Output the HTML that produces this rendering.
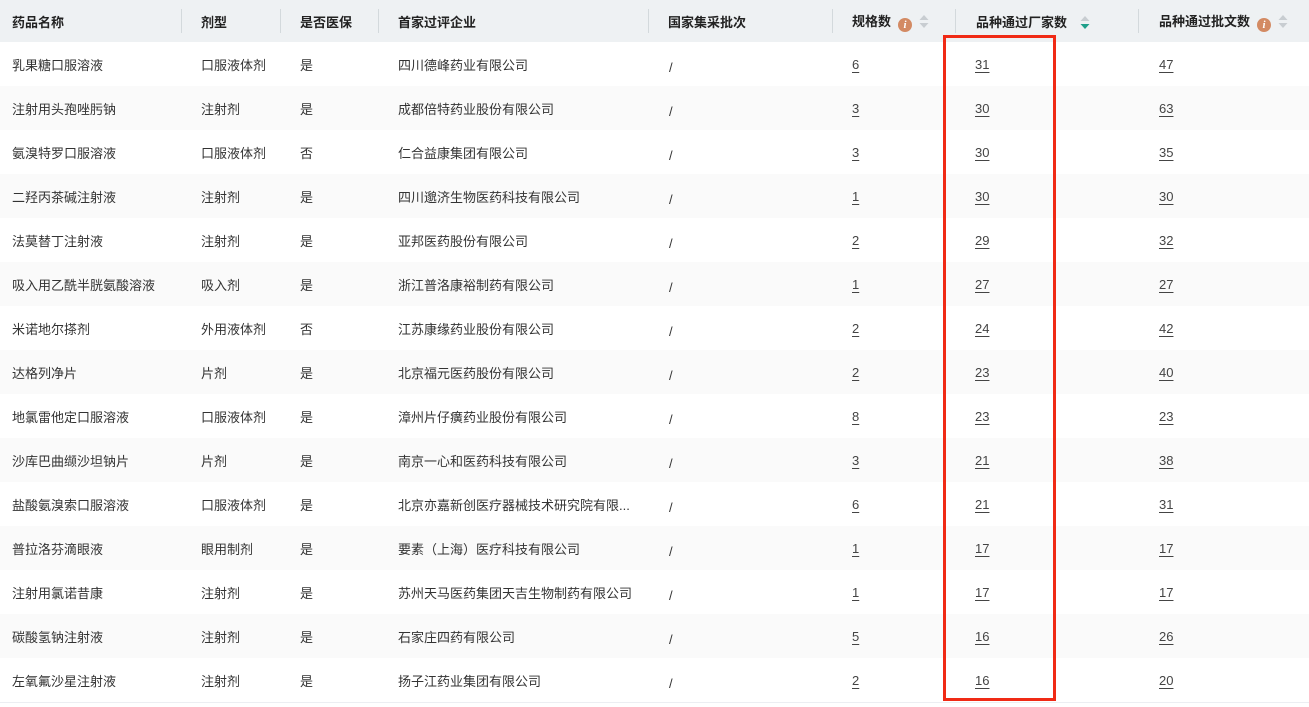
<!DOCTYPE html>
<html><head><meta charset="utf-8"><style>
body{margin:0;width:1309px;height:707px;overflow:hidden;background:#fff;font-family:"Liberation Sans","Noto Sans CJK SC",sans-serif;font-size:13px;color:#333}
table{border-collapse:collapse;table-layout:fixed;width:1309px}
th,td{padding:0 0 0 20px;text-align:left;white-space:nowrap;overflow:hidden}
th:first-child,td:first-child{padding-left:12px}
th{height:42px;background:#eef1f3;font-weight:bold;color:#222;position:relative}
th+th::before{content:"";position:absolute;left:0;top:9px;height:24px;width:1px;background:#d3d9dc}
td{height:44px}
tbody tr:nth-child(odd) td{background:#fff}
tbody tr:nth-child(even) td{background:#fafafa}
tbody tr:last-child td{border-bottom:1px solid #eceef2}
u{text-decoration:underline;text-underline-offset:3px;color:#444}
.i{display:inline-block;width:14px;height:14px;border-radius:50%;background:#d38a63;color:#fff;font-size:11px;font-style:italic;font-weight:bold;text-align:center;line-height:14px;vertical-align:-2px;margin-left:7px;font-family:"Liberation Serif",serif}
.s{display:inline-block;vertical-align:-3px;margin-left:7px}
.sl{padding-left:21px}
.sl span{position:relative;top:3px}
.box{position:absolute;left:943px;top:35px;width:107px;height:660px;border:3px solid #f02a15}
</style></head><body>
<table>
<colgroup><col style="width:181px"><col style="width:99px"><col style="width:98px"><col style="width:270px"><col style="width:184px"><col style="width:123px"><col style="width:183px"><col style="width:171px"></colgroup>
<thead><tr><th>药品名称</th><th>剂型</th><th>是否医保</th><th>首家过评企业</th><th>国家集采批次</th>
<th>规格数<span class="i">i</span><svg class="s" width="10" height="15"><path d="M5 1L9.5 6H0.5z" fill="#c8cdd1"/><path d="M5 14L9.5 9H0.5z" fill="#c8cdd1"/></svg></th>
<th style="padding-left:21px">品种通过厂家数<svg class="s" width="10" height="15" style="margin-left:13px"><path d="M5 1L9.5 6H0.5z" fill="#c8cdd1"/><path d="M5 14L9.5 9H0.5z" fill="#1fa08a"/></svg></th>
<th style="padding-left:21px">品种通过批文数<span class="i">i</span><svg class="s" width="10" height="15"><path d="M5 1L9.5 6H0.5z" fill="#c8cdd1"/><path d="M5 14L9.5 9H0.5z" fill="#c8cdd1"/></svg></th></tr></thead>
<tbody>
<tr><td>乳果糖口服溶液</td><td>口服液体剂</td><td>是</td><td>四川德峰药业有限公司</td><td class="sl"><span>/</span></td><td><u>6</u></td><td><u>31</u></td><td style="padding-left:21px"><u>47</u></td></tr>
<tr><td>注射用头孢唑肟钠</td><td>注射剂</td><td>是</td><td>成都倍特药业股份有限公司</td><td class="sl"><span>/</span></td><td><u>3</u></td><td><u>30</u></td><td style="padding-left:21px"><u>63</u></td></tr>
<tr><td>氨溴特罗口服溶液</td><td>口服液体剂</td><td>否</td><td>仁合益康集团有限公司</td><td class="sl"><span>/</span></td><td><u>3</u></td><td><u>30</u></td><td style="padding-left:21px"><u>35</u></td></tr>
<tr><td>二羟丙茶碱注射液</td><td>注射剂</td><td>是</td><td>四川邈济生物医药科技有限公司</td><td class="sl"><span>/</span></td><td><u>1</u></td><td><u>30</u></td><td style="padding-left:21px"><u>30</u></td></tr>
<tr><td>法莫替丁注射液</td><td>注射剂</td><td>是</td><td>亚邦医药股份有限公司</td><td class="sl"><span>/</span></td><td><u>2</u></td><td><u>29</u></td><td style="padding-left:21px"><u>32</u></td></tr>
<tr><td>吸入用乙酰半胱氨酸溶液</td><td>吸入剂</td><td>是</td><td>浙江普洛康裕制药有限公司</td><td class="sl"><span>/</span></td><td><u>1</u></td><td><u>27</u></td><td style="padding-left:21px"><u>27</u></td></tr>
<tr><td>米诺地尔搽剂</td><td>外用液体剂</td><td>否</td><td>江苏康缘药业股份有限公司</td><td class="sl"><span>/</span></td><td><u>2</u></td><td><u>24</u></td><td style="padding-left:21px"><u>42</u></td></tr>
<tr><td>达格列净片</td><td>片剂</td><td>是</td><td>北京福元医药股份有限公司</td><td class="sl"><span>/</span></td><td><u>2</u></td><td><u>23</u></td><td style="padding-left:21px"><u>40</u></td></tr>
<tr><td>地氯雷他定口服溶液</td><td>口服液体剂</td><td>是</td><td>漳州片仔癀药业股份有限公司</td><td class="sl"><span>/</span></td><td><u>8</u></td><td><u>23</u></td><td style="padding-left:21px"><u>23</u></td></tr>
<tr><td>沙库巴曲缬沙坦钠片</td><td>片剂</td><td>是</td><td>南京一心和医药科技有限公司</td><td class="sl"><span>/</span></td><td><u>3</u></td><td><u>21</u></td><td style="padding-left:21px"><u>38</u></td></tr>
<tr><td>盐酸氨溴索口服溶液</td><td>口服液体剂</td><td>是</td><td>北京亦嘉新创医疗器械技术研究院有限...</td><td class="sl"><span>/</span></td><td><u>6</u></td><td><u>21</u></td><td style="padding-left:21px"><u>31</u></td></tr>
<tr><td>普拉洛芬滴眼液</td><td>眼用制剂</td><td>是</td><td>要素（上海）医疗科技有限公司</td><td class="sl"><span>/</span></td><td><u>1</u></td><td><u>17</u></td><td style="padding-left:21px"><u>17</u></td></tr>
<tr><td>注射用氯诺昔康</td><td>注射剂</td><td>是</td><td>苏州天马医药集团天吉生物制药有限公司</td><td class="sl"><span>/</span></td><td><u>1</u></td><td><u>17</u></td><td style="padding-left:21px"><u>17</u></td></tr>
<tr><td>碳酸氢钠注射液</td><td>注射剂</td><td>是</td><td>石家庄四药有限公司</td><td class="sl"><span>/</span></td><td><u>5</u></td><td><u>16</u></td><td style="padding-left:21px"><u>26</u></td></tr>
<tr><td>左氧氟沙星注射液</td><td>注射剂</td><td>是</td><td>扬子江药业集团有限公司</td><td class="sl"><span>/</span></td><td><u>2</u></td><td><u>16</u></td><td style="padding-left:21px"><u>20</u></td></tr>
</tbody></table>
<div class="box"></div>
</body></html>
